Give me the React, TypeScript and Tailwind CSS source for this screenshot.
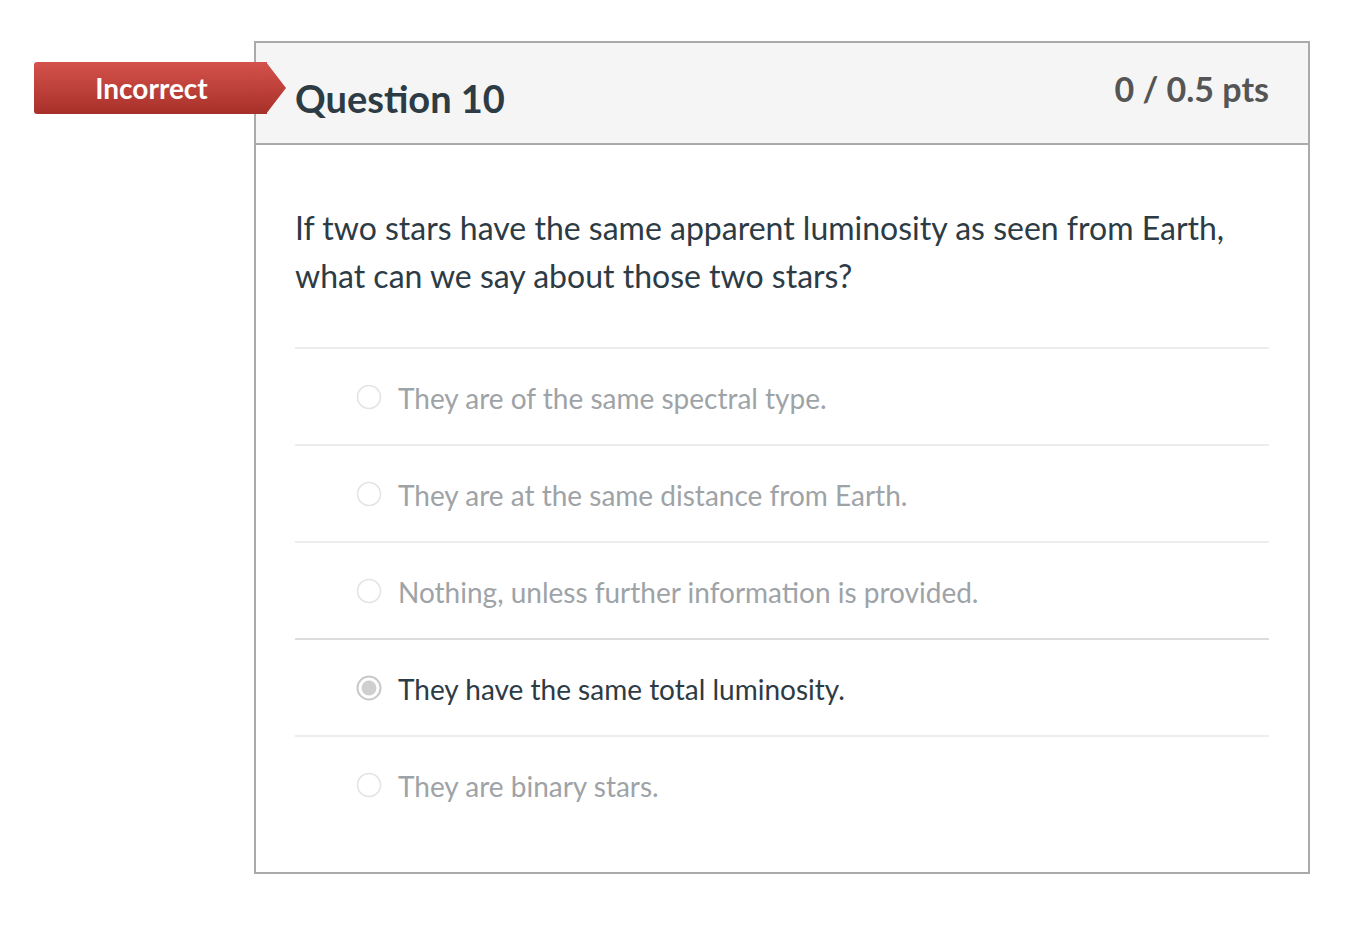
import React from "react";

const options = [
  { text: "They are of the same spectral type.", selected: false },
  { text: "They are at the same distance from Earth.", selected: false },
  { text: "Nothing, unless further information is provided.", selected: false },
  { text: "They have the same total luminosity.", selected: true },
  { text: "They are binary stars.", selected: false },
];

function Radio({ selected }: { selected: boolean }) {
  return (
    <svg width="26" height="26" viewBox="0 0 26 26" className="shrink-0">
      {selected ? (
        <>
          <circle cx="13" cy="13" r="11.5" fill="#fff" stroke="#c8c8c8" strokeWidth="2" />
          <circle cx="13" cy="13" r="7.5" fill="#cfcfcf" />
        </>
      ) : (
        <circle cx="13" cy="13" r="11.5" fill="#fff" stroke="#e3e3e3" strokeWidth="1.5" />
      )}
    </svg>
  );
}

export default function App() {
  return (
    <div
      className="min-h-[926px] bg-white pt-[41px] pl-[254px]"
      style={{ fontFamily: "Lato, 'Open Sans', sans-serif" }}
    >
      <div className="relative w-[1056px] border-2 border-[#aaaaaa] bg-white">
        {/* badge */}
        <div className="absolute left-[-222px] top-[19px] flex h-[52px] items-center">
          <div className="flex h-[52px] w-[233px] items-center justify-center rounded-l-[3px] bg-gradient-to-b from-[#d4524b] to-[#a8302a] pl-[2px] text-[28px] font-bold text-white">
            Incorrect
          </div>
          <svg width="20" height="52" viewBox="0 0 20 52" className="-ml-px">
            <defs>
              <linearGradient id="g" x1="0" y1="0" x2="0" y2="1">
                <stop offset="0" stopColor="#d4524b" />
                <stop offset="1" stopColor="#a8302a" />
              </linearGradient>
            </defs>
            <polygon points="0,0 0,52 20,26" fill="url(#g)" />
          </svg>
        </div>

        {/* header */}
        <div className="flex h-[102px] items-start justify-between border-b-2 border-[#aaaaaa] bg-[#f5f5f5] px-[39px]">
          <div className="pt-[29px] text-[38px] font-bold leading-[52px] text-[#2d3b45]">Question 10</div>
          <div className="pt-[24px] text-[34px] font-bold leading-[44px] text-[#555555]">0 / 0.5 pts</div>
        </div>

        {/* body */}
        <div className="px-[39px] pt-[59px] pb-[40px]">
          <p className="text-[32px] leading-[48px] text-[#2d3b45]">
            If two stars have the same apparent luminosity as seen from Earth,
            <br />
            what can we say about those two stars?
          </p>
          <div className="mt-[47px]">
            {options.map((o, i) => (
              <div
                key={i}
                className={`flex h-[97px] items-center gap-[16px] border-t-2 pl-[61px] ${
                  i === 3 ? "border-[#dcdcdc]" : "border-[#ededed]"
                }`}
              >
                <Radio selected={o.selected} />
                <span
                  className={`pt-[3px] text-[28px] leading-[36px] ${
                    o.selected ? "text-[#2d3b45]" : "text-[#9ea3a7]"
                  }`}
                >
                  {o.text}
                </span>
              </div>
            ))}
          </div>
        </div>
      </div>
    </div>
  );
}
